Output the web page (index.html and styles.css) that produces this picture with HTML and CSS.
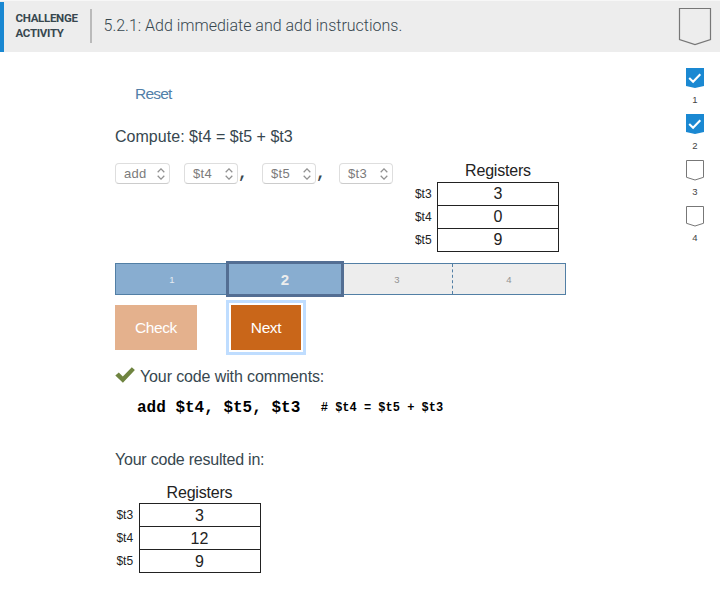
FILE: index.html
```html
<!DOCTYPE html>
<html lang="en">
<head>
<meta charset="utf-8">
<title>Challenge activity 5.2.1</title>
<link rel="stylesheet" href="styles.css">
</head>
<body>
<header class="header">
  <div class="kind">CHALLENGE<br>ACTIVITY</div>
  <h1 class="title">5.2.1: Add immediate and add instructions.</h1>
  <svg class="badge-large" width="34" height="38" viewBox="0 0 34 38"><path d="M1.5 .5H32.5V31.5L17 36.5L1.5 31.5Z" fill="none" stroke="#777" stroke-width="1.2"/></svg>
</header>
<div class="layout">
  <main class="content">
    <a class="reset">Reset</a>
    <p class="compute">Compute: $t4 = $t5 + $t3</p>
    <div class="work">
      <div class="instruction">
        <span class="select op">add<svg width="8" height="12" viewBox="0 0 8 12"><path d="M.7 4.2L4 .9L7.3 4.2M.7 7.8L4 11.1L7.3 7.8"/></svg></span>
        <span class="select dest">$t4<svg width="8" height="12" viewBox="0 0 8 12"><path d="M.7 4.2L4 .9L7.3 4.2M.7 7.8L4 11.1L7.3 7.8"/></svg></span><b class="comma">,</b>
        <span class="select src">$t5<svg width="8" height="12" viewBox="0 0 8 12"><path d="M.7 4.2L4 .9L7.3 4.2M.7 7.8L4 11.1L7.3 7.8"/></svg></span><b class="comma second">,</b>
        <span class="select last">$t3<svg width="8" height="12" viewBox="0 0 8 12"><path d="M.7 4.2L4 .9L7.3 4.2M.7 7.8L4 11.1L7.3 7.8"/></svg></span>
      </div>
      <table class="registers">
        <tr><th></th><th>Registers</th></tr>
        <tr><td class="name">$t3</td><td class="value">3</td></tr>
        <tr><td class="name">$t4</td><td class="value">0</td></tr>
        <tr><td class="name">$t5</td><td class="value">9</td></tr>
      </table>
    </div>
    <div class="progress">
      <div class="step done">1</div>
      <div class="step current">2</div>
      <div class="step">3</div>
      <div class="step final">4</div>
    </div>
    <div class="buttons">
      <button class="button check">Check</button>
      <button class="button next">Next</button>
    </div>
    <div class="feedback">
      <svg width="20" height="16" viewBox="0 0 20 16"><path d="M.3 8.6L3.8 5.4L7.8 9.4L16.8 .3L19.9 3L7.9 15.7Z" fill="#6f8440"/></svg>
      <span class="correct">Your code with comments:</span>
    </div>
    <div class="code"><span>add $t4, $t5, $t3</span><span class="comment"># $t4 = $t5 + $t3</span></div>
    <p class="result">Your code resulted in:</p>
    <table class="registers">
      <tr><th></th><th>Registers</th></tr>
      <tr><td class="name">$t3</td><td class="value">3</td></tr>
      <tr><td class="name">$t4</td><td class="value">12</td></tr>
      <tr><td class="name">$t5</td><td class="value">9</td></tr>
    </table>
  </main>
  <aside class="levels">
    <div class="level"><svg width="18" height="21" viewBox="0 0 18 21"><path d="M0 0H18V18L9 20L0 18Z" fill="#1a88d2"/><path d="M3.2 9.9L7.1 13.7L14.3 6.3" fill="none" stroke="#fff" stroke-width="2.1"/></svg><span>1</span></div>
    <div class="level"><svg width="18" height="21" viewBox="0 0 18 21"><path d="M0 0H18V18L9 20L0 18Z" fill="#1a88d2"/><path d="M3.2 9.9L7.1 13.7L14.3 6.3" fill="none" stroke="#fff" stroke-width="2.1"/></svg><span>2</span></div>
    <div class="level"><svg width="18" height="21" viewBox="0 0 18 21"><path d="M.5 .5H17.5V17.3L9 20L.5 17.3Z" fill="none" stroke="#777"/></svg><span>3</span></div>
    <div class="level"><svg width="18" height="21" viewBox="0 0 18 21"><path d="M.5 .5H17.5V17.3L9 20L.5 17.3Z" fill="none" stroke="#777"/></svg><span>4</span></div>
  </aside>
</div>
</body>
</html>
```
FILE: styles.css
```css
* { box-sizing: border-box; }
body {
  margin: 0;
  background: #fff;
  color: #37474f;
  font: 16px/20px "Liberation Sans", Arial, sans-serif;
}
p, h1 { margin: 0; font-weight: 400; }
svg { display: block; flex: none; }
.header {
  display: flex;
  height: 52px;
  border-top: 1px solid #f7f7f7;
  background: linear-gradient(#1a88d2, #1a88d2) 0 1px / 4px 100% no-repeat #ededed;
  font-family: Roboto, sans-serif;
}
.kind {
  width: 92px;
  height: 34px;
  margin-top: 8px;
  padding: 2px 0 0 15.5px;
  border-right: 2px solid #bababa;
  font-size: 11.5px;
  line-height: 15px;
  font-weight: 700;
  letter-spacing: -.3px;
}
.title {
  flex: 1;
  margin: 15px 0 0 11.5px;
  font-size: 16px;
  line-height: 20px;
  font-weight: 300;
}
.badge-large { margin: 7px 8px 0 0; }
.layout { display: flex; justify-content: space-between; }
.content { width: 451px; margin-left: 115px; }
.reset {
  display: block;
  margin: 32px 0 0 20px;
  color: #527fa8;
  font-size: 15.5px;
  letter-spacing: -.8px;
}
.compute { margin-top: 23px; letter-spacing: .03px; }
.work { display: flex; justify-content: space-between; width: 444px; margin-top: 13px; }
.instruction { display: flex; margin-top: 3px; }
.select {
  display: flex;
  align-items: center;
  justify-content: space-between;
  height: 21px;
  border: 1px solid #dedede;
  border-bottom-color: #ccc;
  border-radius: 4px;
  padding: 0 4px 0 8px;
  color: #7b7b7b;
  font-size: 13px;
  letter-spacing: .3px;
}
.select path { fill: none; stroke: #929292; stroke-width: 1.3; }
.op { width: 55px; margin-right: 14px; }
.dest, .src, .last { width: 54px; }
.comma { width: 24px; font: 700 16px/22px "Liberation Mono", monospace; }
.second { width: 23px; }
.registers { border-collapse: collapse; color: #222; }
.registers th { height: 22px; padding: 1px 0 0; line-height: 20px; font-weight: 400; letter-spacing: -.2px; }
.registers td { height: 23px; padding: 1px 0 0; }
.registers .name { width: 24px; padding: 0 4px 0 0; font-size: 12px; text-align: center; }
.registers .value { width: 121px; border: 1px solid #222; text-align: center; }
.progress {
  display: flex;
  height: 32px;
  margin-top: 11px;
  border: 1px solid #527fa5;
  background: #ededed;
}
.step { width: 110px; color: #929292; font-size: 9.5px; line-height: 31px; text-align: center; }
.done { background: #88add0; color: #e4ebf2; padding-left: 2px; }
.current {
  width: 118px;
  height: 36px;
  margin: -3px 0;
  border: 3px solid #536e93;
  background: #88add0;
  color: #ededed;
  font-size: 15px;
  font-weight: 700;
}
.step:nth-child(3) { width: 108px; padding-right: 2px; }
.final { width: 113px; border-left: 1px dashed #527fa5; }
.buttons { display: flex; margin-top: 10px; }
.button {
  height: 45px;
  padding: 1px 0 0;
  border: 0;
  color: #fff;
  font: 15.5px/20px "Liberation Sans", Arial, sans-serif;
  letter-spacing: -.4px;
}
.check { width: 82px; background: #e4b18d; }
.next { width: 70px; margin-left: 34px; background: #c96619; box-shadow: 0 0 0 2px #fff, 0 0 0 5px #bfddff; }
.feedback { display: flex; align-items: center; gap: 5px; height: 20px; margin-top: 17px; }
.feedback svg { margin-top: -4px; }
.correct { padding-top: 1px; letter-spacing: -.12px; }
.code {
  display: flex;
  align-items: center;
  margin: 11px 0 0 22px;
  color: #000;
  font: 700 16px/20px "Liberation Mono", monospace;
}
.comment { margin-left: 20.5px; padding-top: 1px; font-size: 12px; line-height: 19px; }
.result { margin-top: 32px; letter-spacing: -.22px; }
.result + .registers { margin-top: 12px; }
.levels { width: 18px; margin: 16px 16px 0 0; }
.level { height: 46px; color: #444; font-size: 9.5px; text-align: center; }
.level span { display: block; line-height: 20px; padding-top: 1px; }
```
